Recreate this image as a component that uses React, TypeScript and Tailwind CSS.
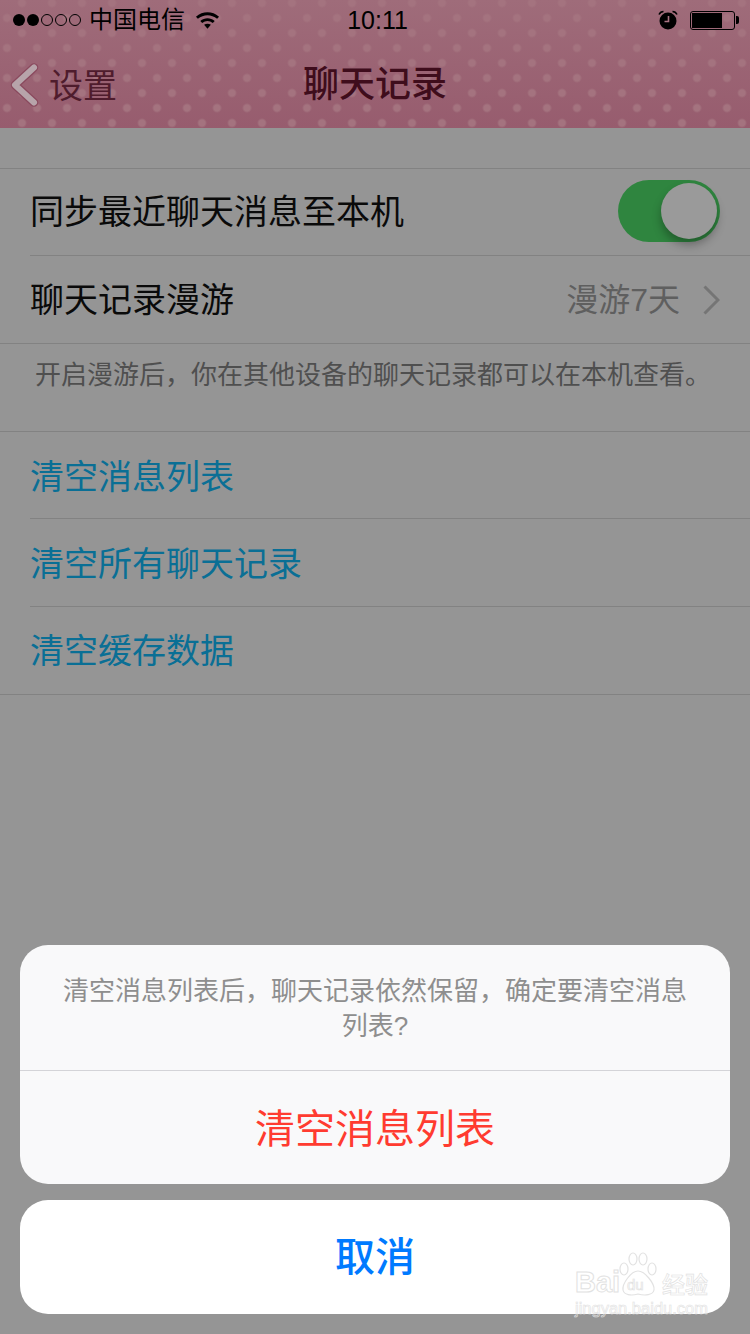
import React from 'react';

const cjk = 'font-["Liberation_Sans","Noto_Sans_CJK_SC",sans-serif]';

const StatusBar = () => (
  <div className="relative flex h-[40px] items-center text-black">
    <div className="flex items-center pl-[13px]">
      <div className="flex items-center gap-[2px]">
        <span className="h-[12px] w-[12px] rounded-full bg-black" />
        <span className="h-[12px] w-[12px] rounded-full bg-black" />
        <span className="h-[12px] w-[12px] rounded-full border border-black" />
        <span className="h-[12px] w-[12px] rounded-full border border-black" />
        <span className="h-[12px] w-[12px] rounded-full border border-black" />
      </div>
      <span className="ml-[8px] text-[24px] leading-[40px]">中国电信</span>
      <svg className="ml-[10px]" width="25" height="20" viewBox="0 0 26 20">
        <path d="M1 6.5C8 0.5 18 0.5 25 6.5L23 8.8C17 3.8 9 3.8 3 8.8Z" fill="#000" />
        <path d="M5.5 11C10 7.2 16 7.2 20.5 11L18.5 13.2C15 10.4 11 10.4 7.5 13.2Z" fill="#000" />
        <path d="M9.5 15C11.5 13.5 14.5 13.5 16.5 15L13 19Z" fill="#000" />
      </svg>
    </div>
    <span className="absolute left-0 right-0 pl-[5px] text-center text-[25px] leading-[40px] font-medium">10:11</span>
    <div className="ml-auto flex items-center pr-[11px]">
      <svg width="20" height="20" viewBox="0 0 20 20">
        <circle cx="10" cy="11" r="8.5" fill="#000" />
        <path d="M10.5 6V11.5H6.5" stroke="#a87382" strokeWidth="1.6" fill="none" />
        <path d="M1 4.5C2 2.5 3.5 1.5 5.5 1.5M19 4.5C18 2.5 16.5 1.5 14.5 1.5" stroke="#000" strokeWidth="1.6" fill="none" />
      </svg>
      <div className="ml-[12px] flex h-[19px] w-[45px] items-center rounded-[3px] border border-black p-[1px]">
        <div className="h-full w-[30px] bg-black" />
      </div>
      <div className="ml-[1px] h-[8px] w-[3px] rounded-r-[2px] bg-black" />
    </div>
  </div>
);

const Header = () => (
  <div className="h-[128px] bg-[radial-gradient(circle,#a4737f_0,#a4737f_3px,transparent_5px),radial-gradient(circle,#a4737f_0,#a4737f_3px,transparent_5px),linear-gradient(#9f6c7a,#975c6e)] bg-[size:30px_30px,30px_30px,100%_100%] bg-[position:7px_-12px,-8px_3px,0_0]">
    <StatusBar />
    <div className="relative flex h-[88px] items-center justify-center pt-[2px]">
      <div className="absolute left-[10px] top-[22px] flex items-center">
        <svg width="29" height="44" viewBox="0 0 29 44">
          <path d="M24 4.5L5 22L24 39.5" stroke="#8a4a5e" strokeWidth="8.5" strokeLinecap="round" strokeLinejoin="round" fill="none" />
          <path d="M24 4.5L5 22L24 39.5" stroke="#b7a4aa" strokeWidth="6" strokeLinecap="round" strokeLinejoin="round" fill="none" />
        </svg>
        <span className="ml-[10px] pt-[2px] text-[34px] leading-[44px] text-[#4f1c2d]">设置</span>
      </div>
      <span className="text-[36px] leading-[44px] font-medium text-[#3f0d1c]">聊天记录</span>
    </div>
  </div>
);

const Row = ({ children, className }: { children: React.ReactNode; className?: string }) => (
  <div className="pl-[30px]">
    <div className={`flex items-center pr-[30px] ${className ?? ''}`}>{children}</div>
  </div>
);

const Toggle = () => (
  <div className="relative ml-auto -mt-[2px] h-[62px] w-[102px] rounded-full bg-[#2f853f]">
    <div className="absolute right-[3px] top-[3px] h-[56px] w-[56px] rounded-full bg-[#9a9a9a] shadow-[0_6px_10px_rgba(0,0,0,0.3)]" />
  </div>
);

const SettingsList = () => (
  <div className={`${cjk}`}>
    <div className="h-[40px]" />
    <div className="border-y border-[#828282]">
      <Row className="h-[87px] border-b border-[#828282]">
        <span className="text-[34px] text-[#0a0a0a]">同步最近聊天消息至本机</span>
        <Toggle />
      </Row>
      <Row className="h-[87px]">
        <span className="pt-[2px] text-[34px] text-[#0a0a0a]">聊天记录漫游</span>
        <span className="ml-auto text-[32px] text-[#5f5f5f]">漫游7天</span>
        <svg className="ml-[23px]" width="17" height="30" viewBox="0 0 17 30">
          <path d="M1.5 1.5L15 15L1.5 28.5" stroke="#757575" strokeWidth="3" fill="none" />
        </svg>
      </Row>
    </div>
    <p className="h-[87px] pl-[35px] pt-[12px] text-[26px] leading-[38px] text-[#4f4f4f]">
      开启漫游后，你在其他设备的聊天记录都可以在本机查看。
    </p>
    <div className="border-y border-[#828282]">
      <Row className="h-[87px] border-b border-[#828282] pt-[4px]">
        <span className="text-[34px] text-[#0a6f95]">清空消息列表</span>
      </Row>
      <Row className="h-[88px] border-b border-[#828282] pt-[4px]">
        <span className="text-[34px] text-[#0a6f95]">清空所有聊天记录</span>
      </Row>
      <Row className="h-[87px] pt-[2px]">
        <span className="text-[34px] text-[#0a6f95]">清空缓存数据</span>
      </Row>
    </div>
  </div>
);

// faint baidu jingyan stamp in the lower right corner
const Watermark = () => (
  <div className="absolute left-[555px] top-[52px] h-[64px] w-[136px] text-transparent">
    <span className="absolute left-0 top-[14px] font-['Liberation_Sans',sans-serif] text-[29px] leading-[32px] font-bold [-webkit-text-stroke:1px_#e2e2e2]">Bai</span>
    <svg className="absolute left-[44px] top-0" width="40" height="46" viewBox="0 0 40 46" fill="none" stroke="#e2e2e2" strokeWidth="1.2">
      <ellipse cx="5" cy="17" rx="4" ry="6" />
      <ellipse cx="14" cy="7" rx="4" ry="6" />
      <ellipse cx="24" cy="7" rx="4" ry="6" />
      <ellipse cx="33" cy="17" rx="4" ry="6" />
      <path d="M19 19C12 19 3 32 4 38C5 43 12 44 19 42C26 44 34 43 35 38C36 32 26 19 19 19Z" />
    </svg>
    <span className="absolute left-[52px] top-[24px] font-['Liberation_Sans',sans-serif] text-[15px] leading-[18px] [-webkit-text-stroke:0.7px_#e2e2e2]">du</span>
    <span className="absolute left-[87px] top-[17px] font-['Noto_Sans_CJK_SC',sans-serif] text-[23px] leading-[28px] [-webkit-text-stroke:0.7px_#e2e2e2]">经验</span>
    <span className="absolute left-0 top-[46px] whitespace-nowrap font-['Liberation_Sans',sans-serif] text-[16.5px] leading-[20px] [-webkit-text-stroke:0.6px_#e2e2e2]">jingyan.baidu.com</span>
  </div>
);

const Sheet = () => (
  <div className={`absolute bottom-[20px] left-[20px] right-[20px] ${cjk}`}>
    <div className="overflow-hidden rounded-[28px] bg-[#f9f9fa]">
      <div className="flex h-[126px] items-center justify-center border-b border-[#d4d4d8] px-[40px] pt-[2px] text-center text-[26px] leading-[35px] text-[#8e8e8e]">
        <p>清空消息列表后，聊天记录依然保留，确定要清空消息列表?</p>
      </div>
      <div className="flex h-[113px] items-center justify-center pt-[2px] text-[40px] text-[#ff3b30]">清空消息列表</div>
    </div>
    <div className="relative mt-[16px] flex h-[114px] items-center justify-center rounded-[28px] bg-white text-[40px] font-medium text-[#007aff]">
      取消
      <Watermark />
    </div>
  </div>
);

const App: React.FC = () => {
  return (
    <div className={`relative h-[1334px] w-[750px] overflow-hidden bg-[#959595] ${cjk}`}>
      <Header />
      <SettingsList />
      <Sheet />
    </div>
  );
};

export default App;
